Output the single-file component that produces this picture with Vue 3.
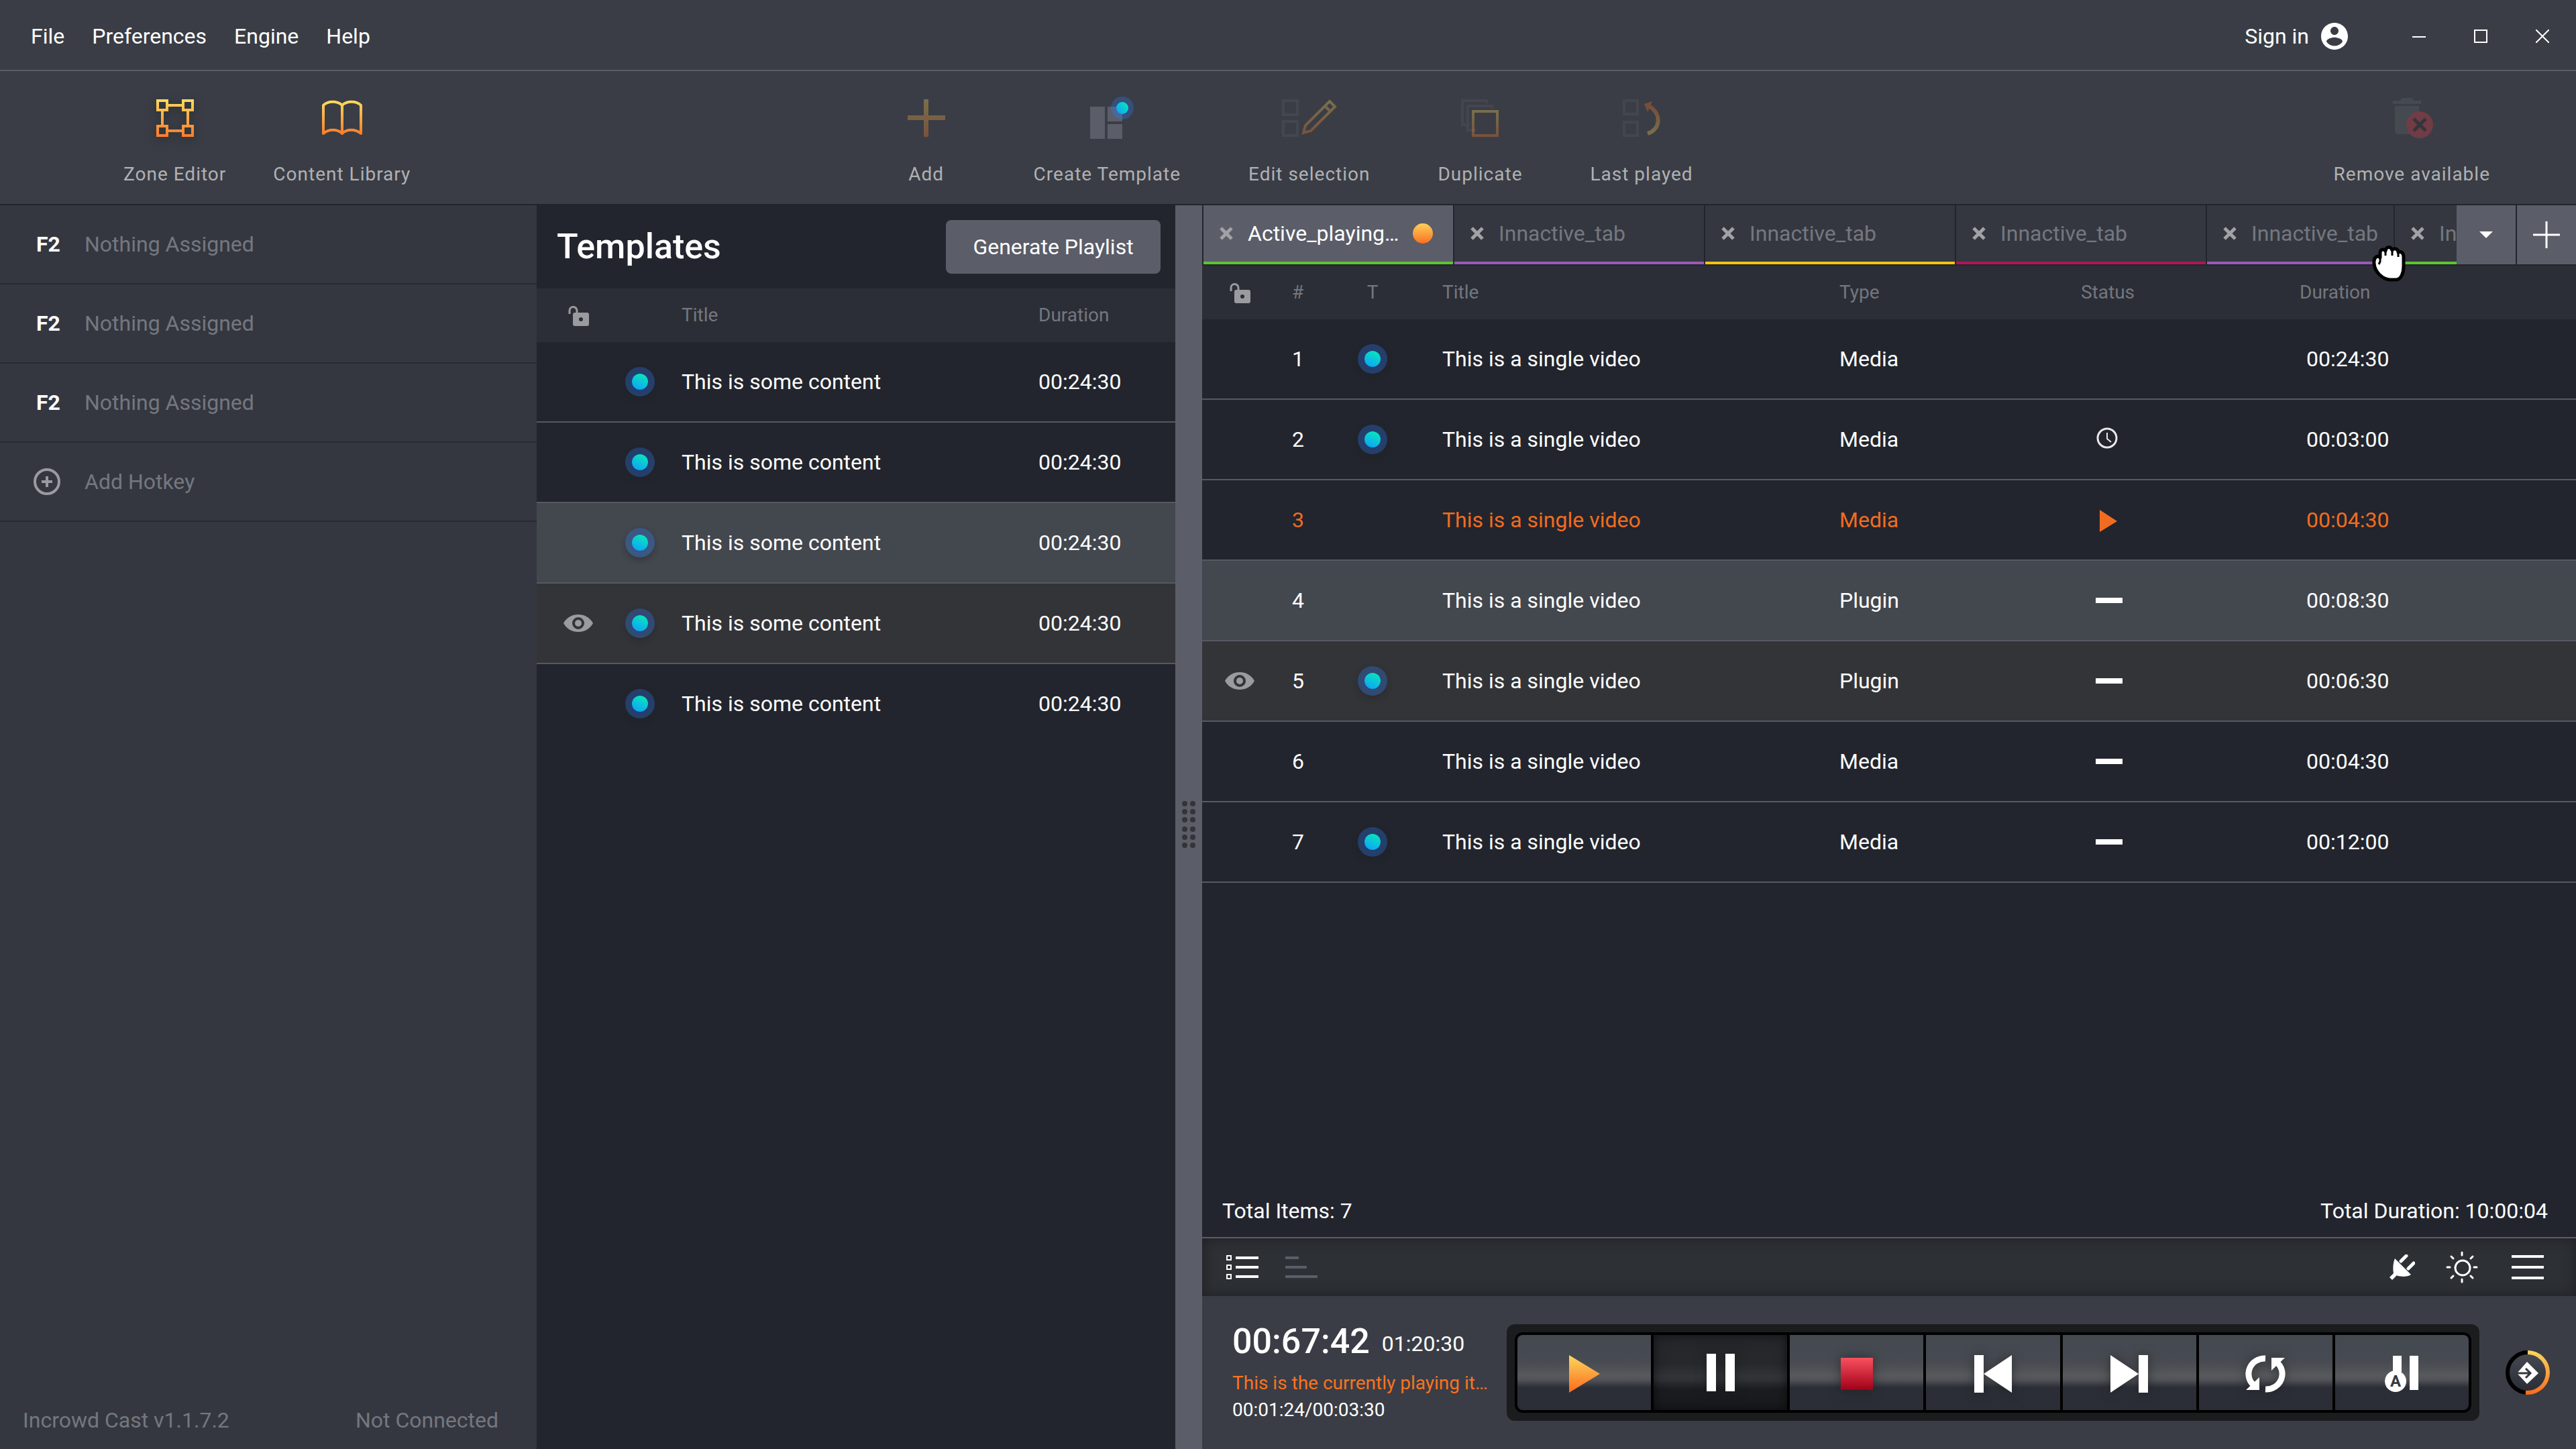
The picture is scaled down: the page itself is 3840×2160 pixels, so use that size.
<script setup>
const menus = ['File', 'Preferences', 'Engine', 'Help']

const hotkeys = [
  { key: 'F2', label: 'Nothing Assigned' },
  { key: 'F2', label: 'Nothing Assigned' },
  { key: 'F2', label: 'Nothing Assigned' }
]

const templates = [
  { title: 'This is some content', duration: '00:24:30' },
  { title: 'This is some content', duration: '00:24:30' },
  { title: 'This is some content', duration: '00:24:30', state: 'selected' },
  { title: 'This is some content', duration: '00:24:30', state: 'hovered' },
  { title: 'This is some content', duration: '00:24:30' }
]

const tabs = [
  { label: 'Active_playing…', color: 'green', active: true },
  { label: 'Innactive_tab', color: 'purple' },
  { label: 'Innactive_tab', color: 'yellow' },
  { label: 'Innactive_tab', color: 'crimson' },
  { label: 'Innactive_tab', color: 'purple', narrow: true },
  { label: 'Innactive_tab', color: 'green' }
]

const items = [
  { id: 1, template: true, type: 'Media', status: '', duration: '00:24:30' },
  { id: 2, template: true, type: 'Media', status: 'clock', duration: '00:03:00' },
  { id: 3, template: false, type: 'Media', status: 'play', duration: '00:04:30', state: 'playing' },
  { id: 4, template: false, type: 'Plugin', status: 'dash', duration: '00:08:30', state: 'selected' },
  { id: 5, template: true, type: 'Plugin', status: 'dash', duration: '00:06:30', state: 'hovered' },
  { id: 6, template: false, type: 'Media', status: 'dash', duration: '00:04:30' },
  { id: 7, template: true, type: 'Media', status: 'dash', duration: '00:12:00' }
]
</script>

<template>
  <div class="app">
    <svg class="defs" width="0" height="0" aria-hidden="true">
      <defs>
        <linearGradient id="gold" x1="0" y1="0" x2="0" y2="1">
          <stop offset="0" stop-color="#fdd75c" />
          <stop offset="1" stop-color="#fd7f2c" />
        </linearGradient>
        <linearGradient id="goldUp" x1="0" y1="1" x2="0" y2="0">
          <stop offset="0" stop-color="#fdd75c" />
          <stop offset="1" stop-color="#fb6f20" />
        </linearGradient>
        <linearGradient id="flame" x1="0" y1="0" x2="0" y2="1">
          <stop offset="0" stop-color="#fdd85f" />
          <stop offset="1" stop-color="#fb6a1c" />
        </linearGradient>
        <linearGradient id="ruby" x1="0" y1="0" x2="0" y2="1">
          <stop offset="0" stop-color="#f9505f" />
          <stop offset="1" stop-color="#a00018" />
        </linearGradient>
        <linearGradient id="aqua" x1="1" y1="0" x2="0" y2="1">
          <stop offset="0" stop-color="#06efb4" />
          <stop offset="1" stop-color="#0f9bff" />
        </linearGradient>
        <linearGradient id="well" x1="0" y1="0" x2="0" y2="1">
          <stop offset="0" stop-color="#454950" />
          <stop offset="1" stop-color="#2b2d36" />
        </linearGradient>
      </defs>
    </svg>

    <header class="menubar">
      <nav class="menus">
        <button v-for="m in menus" :key="m" type="button">{{ m }}</button>
      </nav>
      <div class="window-side">
        <button class="signin" type="button">
          Sign in
          <svg width="40" height="40" viewBox="2 2 20 20" fill="#fff">
            <path d="M12 2C6.48 2 2 6.48 2 12s4.48 10 10 10 10-4.48 10-10S17.52 2 12 2zm0 3c1.66 0 3 1.34 3 3s-1.34 3-3 3-3-1.34-3-3 1.34-3 3-3zm0 14.2c-2.5 0-4.71-1.28-6-3.22.03-1.99 4-3.08 6-3.08 1.99 0 5.97 1.09 6 3.08-1.29 1.94-3.5 3.22-6 3.22z" />
          </svg>
        </button>
        <div class="window-buttons">
          <button type="button" aria-label="Minimize">
            <svg width="20" height="20" viewBox="0 0 20 20"><path d="M0 11H20" stroke="#fff" stroke-width="2" /></svg>
          </button>
          <button type="button" aria-label="Maximize">
            <svg width="20" height="20" viewBox="0 0 20 20"><rect x="1" y="1" width="18" height="18" fill="none" stroke="#fff" stroke-width="2" /></svg>
          </button>
          <button type="button" aria-label="Close">
            <svg width="20" height="20" viewBox="0 0 20 20"><path d="M0 0L20 20M20 0L0 20" stroke="#fff" stroke-width="2" /></svg>
          </button>
        </div>
      </div>
    </header>

    <div class="toolbar">
      <div class="tools tools-left">
        <button class="tool" type="button">
          <svg class="raised" width="56" height="56" viewBox="0 0 56 56" fill="none" stroke="url(#gold)" stroke-width="4">
            <path d="M2 2H16V16H2ZM40 2H54V16H40ZM2 40H16V54H2ZM40 40H54V54H40ZM18 9H38M18 47H38M9 18V38M47 18V38" />
          </svg>
          <span>Zone Editor</span>
        </button>
        <button class="tool" type="button">
          <svg width="60" height="56" viewBox="0 0 60 56" fill="none" stroke="url(#gold)" stroke-width="4" stroke-linejoin="round">
            <path d="M2 51V9C9 2 23 2 30 9C37 2 51 2 58 9V51C50 44 37 44 30 51C23 44 10 44 2 51ZM30 9V51" />
          </svg>
          <span>Content Library</span>
        </button>
      </div>
      <div class="tools tools-mid">
        <button class="tool tool-add" type="button">
          <svg class="dim" width="56" height="56" viewBox="0 0 56 56" fill="url(#gold)">
            <path d="M24 0H31V24H56V31H31V56H24V31H0V24H24Z" />
          </svg>
          <span>Add</span>
        </button>
        <button class="tool" type="button">
          <svg class="spill" width="50" height="56" viewBox="0 0 50 56">
            <path d="M0 11H22V59H0ZM26 11H48V33H26ZM26 37H48V59H26Z" fill="#5b5d68" />
            <circle cx="48" cy="13" r="17" fill="#2a7fff" fill-opacity=".3" />
            <circle cx="48" cy="13" r="9" fill="url(#aqua)" />
          </svg>
          <span>Create Template</span>
        </button>
        <button class="tool" type="button">
          <svg width="82" height="56" viewBox="0 0 82 56" fill="none" stroke-width="4">
            <path d="M2 2H23V23H2ZM2 33H23V54H2Z" stroke="#43474f" />
            <path class="dim" d="M71 3L79 11L43 47L32 50L35 39ZM64 10L72 18" stroke="url(#gold)" />
          </svg>
          <span>Edit selection</span>
        </button>
        <button class="tool" type="button">
          <svg width="56" height="56" viewBox="0 0 56 56" fill="none" stroke-width="4">
            <path d="M14 38H2V2H38V6M22 46H10V10H46V14" stroke="#43474d" />
            <rect class="dim" x="18" y="18" width="36" height="36" stroke="url(#gold)" />
          </svg>
          <span>Duplicate</span>
        </button>
        <button class="tool" type="button">
          <svg width="56" height="56" viewBox="0 0 56 56" fill="none" stroke-width="4">
            <path d="M2 2H22V22H2ZM2 34H22V54H2Z" stroke="#43474d" />
            <g class="dim">
              <path d="M39 10C59 22 56 45 37 51" stroke="url(#goldUp)" stroke-width="6" />
              <path d="M32 7L44 3L37 19Z" fill="#fb6f20" />
            </g>
          </svg>
          <span>Last played</span>
        </button>
      </div>
      <div class="tools tools-right">
        <button class="tool" type="button">
          <svg class="spill" width="56" height="56" viewBox="0 0 56 56">
            <path d="M0 2H11L13 -2H29L31 2H42V7H0ZM3 10H39V46Q39 52 33 52H9Q3 52 3 46Z" fill="#454950" />
            <circle cx="40" cy="38" r="20" fill="#703c46" />
            <path d="M31 29L49 47M49 29L31 47" stroke="#33363c" stroke-width="5" />
          </svg>
          <span>Remove available</span>
        </button>
      </div>
    </div>

    <main class="workspace">
      <aside class="sidebar">
        <ul class="hotkeys">
          <li v-for="(h, i) in hotkeys" :key="i">
            <strong>{{ h.key }}</strong><span>{{ h.label }}</span>
          </li>
          <li>
            <button class="add-hotkey" type="button">
              <svg width="40" height="40" viewBox="0 0 40 40" fill="none" stroke="#9a9b9f">
                <circle cx="20" cy="20" r="18" stroke-width="4" />
                <path d="M20 12V28M12 20H28" stroke-width="4" />
              </svg>
              <span>Add Hotkey</span>
            </button>
          </li>
        </ul>
        <footer class="status">
          <span>Incrowd Cast v1.1.7.2</span>
          <span>Not Connected</span>
        </footer>
      </aside>

      <section class="templates">
        <div class="templates-head">
          <h1>Templates</h1>
          <button class="generate" type="button">Generate Playlist</button>
        </div>
        <table>
          <colgroup>
            <col class="c-lock"><col class="c-mark"><col><col class="c-time">
          </colgroup>
          <thead>
            <tr>
              <th class="mid" aria-label="Locked">
                <svg width="31" height="31" viewBox="0 0 31 31">
                  <path d="M2 13V8A5 5 0 0 1 13 8V12" fill="none" stroke="#9a9b9f" stroke-width="3" />
                  <path fill-rule="evenodd" d="M10 11H28Q31 11 31 14V28Q31 31 28 31H10Q7 31 7 28V14Q7 11 10 11ZM19 18A3 3 0 1 0 19 24A3 3 0 1 0 19 18Z" fill="#9a9b9f" />
                </svg>
              </th>
              <th aria-label="Template"></th>
              <th class="title">Title</th>
              <th>Duration</th>
            </tr>
          </thead>
          <tbody>
            <tr v-for="(t, i) in templates" :key="i" :class="t.state">
              <td class="mid">
                <svg v-if="t.state === 'hovered'" width="44" height="28" viewBox="0 0 44 28">
                  <path fill-rule="evenodd" d="M0 14C5 5 13 1 22 1S39 5 44 14C39 23 31 27 22 27S5 23 0 14ZM22 5A9 9 0 1 0 22 23A9 9 0 1 0 22 5Z" fill="#9a9b9f" />
                  <circle cx="22" cy="14" r="5" fill="#9a9b9f" />
                </svg>
              </td>
              <td class="mid"><span class="dot"></span></td>
              <td class="title">{{ t.title }}</td>
              <td>{{ t.duration }}</td>
            </tr>
          </tbody>
        </table>
      </section>

      <div class="splitter" role="separator" aria-orientation="vertical">
        <svg width="20" height="70" viewBox="0 0 20 70" fill="#333438">
          <template v-for="y in [4, 16, 28, 42, 54, 66]" :key="y">
            <circle cx="4" :cy="y" r="4" /><circle cx="16" :cy="y" r="4" />
          </template>
        </svg>
      </div>

      <section class="playlist">
        <div class="tabbar">
          <div class="tabs" role="tablist">
            <div v-for="(t, i) in tabs" :key="i" :class="['tab', t.color, { active: t.active, narrow: t.narrow }]">
              <button type="button" class="tab-close" aria-label="Close tab">
                <svg width="22" height="20" viewBox="0 0 22 20"><path d="M3 2L19 18M19 2L3 18" stroke="#a1a2a5" stroke-width="5" /></svg>
              </button>
              <button type="button" class="tab-label" role="tab" :aria-selected="!!t.active">{{ t.label }}</button>
              <span v-if="t.active" class="live"></span>
            </div>
          </div>
          <button class="tab-action" type="button" aria-label="All tabs">
            <svg width="20" height="10" viewBox="0 0 20 10"><path d="M0 0H20L10 10Z" fill="#fff" /></svg>
          </button>
          <button class="tab-action" type="button" aria-label="New tab">
            <svg width="40" height="40" viewBox="0 0 40 40"><path d="M20 0V40M0 20H40" stroke="#fff" stroke-width="3" /></svg>
          </button>
        </div>
        <svg class="grab" width="50" height="54" viewBox="0 0 50 54" fill="#fff" stroke="#000" stroke-linejoin="round">
          <path d="M3 27C2 17 8 14 12 18V10C13 5 18 5 20 8C21 1 28 1 30 7C33 3 39 5 39 10C43 8 47 11 47 17V31C47 40 44 51 35 51H26C15 50 4 39 3 27Z" stroke-width="5" />
          <path d="M12 16V24L10 28M20 8V15M30 7V15M39 10V17" fill="none" stroke-width="3" />
        </svg>
        <table>
          <colgroup>
            <col class="p-lock"><col class="p-num"><col class="p-mark"><col><col class="p-type"><col class="p-status"><col class="p-time">
          </colgroup>
          <thead>
            <tr>
              <th class="mid" aria-label="Locked">
                <svg width="31" height="31" viewBox="0 0 31 31">
                  <path d="M2 13V8A5 5 0 0 1 13 8V12" fill="none" stroke="#9a9b9f" stroke-width="3" />
                  <path fill-rule="evenodd" d="M10 11H28Q31 11 31 14V28Q31 31 28 31H10Q7 31 7 28V14Q7 11 10 11ZM19 18A3 3 0 1 0 19 24A3 3 0 1 0 19 18Z" fill="#9a9b9f" />
                </svg>
              </th>
              <th class="num">#</th>
              <th class="mid">T</th>
              <th class="name">Title</th>
              <th>Type</th>
              <th class="mid">Status</th>
              <th class="time">Duration</th>
            </tr>
          </thead>
          <tbody>
            <tr v-for="it in items" :key="it.id" :class="it.state">
              <td class="mid">
                <svg v-if="it.state === 'hovered'" width="44" height="28" viewBox="0 0 44 28">
                  <path fill-rule="evenodd" d="M0 14C5 5 13 1 22 1S39 5 44 14C39 23 31 27 22 27S5 23 0 14ZM22 5A9 9 0 1 0 22 23A9 9 0 1 0 22 5Z" fill="#9a9b9f" />
                  <circle cx="22" cy="14" r="5" fill="#9a9b9f" />
                </svg>
              </td>
              <td class="num">{{ it.id }}</td>
              <td class="mid"><span v-if="it.template" class="dot"></span></td>
              <td class="name">This is a single video</td>
              <td>{{ it.type }}</td>
              <td class="mid">
                <svg v-if="it.status === 'clock'" width="34" height="36" viewBox="0 0 34 36" fill="none" stroke="#e8e8e8" stroke-width="3">
                  <circle cx="16" cy="16" r="14" /><path d="M16 8V17L22 22" stroke-width="2" />
                </svg>
                <svg v-else-if="it.status === 'play'" width="28" height="38" viewBox="0 0 28 38"><path d="M2 4L28 21L2 37Z" fill="#f16c21" /></svg>
                <svg v-else-if="it.status === 'dash'" width="44" height="8" viewBox="0 0 44 8"><path d="M4 0H44V8H4Z" fill="#fff" /></svg>
              </td>
              <td class="time">{{ it.duration }}</td>
            </tr>
          </tbody>
        </table>

        <div class="totals">
          <span>Total Items: 7</span>
          <span>Total Duration: 10:00:04</span>
        </div>

        <div class="viewbar">
          <div class="view-left">
            <button type="button" aria-label="List view">
              <svg width="48" height="36" viewBox="0 0 48 36">
                <path d="M1 1H7V7H1ZM1 15H7V21H1ZM1 29H7V35H1Z" fill="none" stroke="#fff" stroke-width="2" />
                <path d="M14 2H48V6H14ZM14 16H48V20H14ZM14 30H48V34H14Z" fill="#fff" />
              </svg>
            </button>
            <button type="button" aria-label="Timeline view">
              <svg width="48" height="36" viewBox="0 0 48 36"><path d="M0 2H20V6H0ZM0 16H32V20H0ZM0 30H48V34H0Z" fill="#5b5d68" /></svg>
            </button>
          </div>
          <div class="view-right">
            <button type="button" aria-label="Connection">
              <svg width="38" height="38" viewBox="0 0 38 38" fill="#fff">
                <path d="M8 6L32 30C26 34 18 33 12 32L11 31L4 38L0 34L6 28C5 22 5 13 8 6Z" />
                <path d="M17 10L25 2M28 21L36 13" stroke="#fff" stroke-width="5" stroke-linecap="round" />
              </svg>
            </button>
            <button type="button" aria-label="Brightness">
              <svg class="spill" width="48" height="48" viewBox="2 0 48 48" fill="none" stroke="#fff" stroke-width="3" stroke-linecap="round">
                <circle cx="25" cy="25" r="11" />
                <path d="M24 2V6M24 42V46M2 24H6M42 24H46M8 8L11 11M40 8L37 11M8 40L11 37M40 40L37 37" />
              </svg>
            </button>
            <button type="button" aria-label="Menu">
              <svg width="48" height="36" viewBox="0 0 48 36"><path d="M0 0H48V4H0ZM0 16H48V20H0ZM0 32H48V36H0Z" fill="#fff" /></svg>
            </button>
          </div>
        </div>

        <div class="player">
          <div class="now">
            <div class="clock"><b>00:67:42</b><span>01:20:30</span></div>
            <p class="now-title">This is the currently playing it…</p>
            <p>00:01:24/00:03:30</p>
          </div>
          <div class="transport">
            <div class="keys">
              <button type="button" aria-label="Play">
                <svg width="46" height="56" viewBox="0 0 46 56"><path d="M0 0L46 28L0 56Z" fill="url(#flame)" /></svg>
              </button>
              <button type="button" aria-label="Pause" class="pressed">
                <svg class="glow" width="42" height="56" viewBox="0 0 42 56" fill="#fff"><path d="M0 0H14V56H0ZM28 0H42V56H28Z" /></svg>
              </button>
              <button type="button" aria-label="Stop">
                <svg class="glow" width="48" height="48" viewBox="0 0 48 48"><path d="M0 0H48V48H0Z" fill="url(#ruby)" /></svg>
              </button>
              <button type="button" aria-label="Previous">
                <svg class="glow" width="56" height="56" viewBox="0 0 56 56" fill="#fff"><path d="M0 0H14V56H0ZM56 0V56L14 28Z" /></svg>
              </button>
              <button type="button" aria-label="Next">
                <svg class="glow" width="56" height="56" viewBox="0 0 56 56" fill="#fff"><path d="M42 0H56V56H42ZM0 0V56L42 28Z" /></svg>
              </button>
              <button type="button" aria-label="Loop">
                <svg class="glow" width="58" height="56" viewBox="0 0 58 56" fill="none" stroke="#fff" stroke-width="9">
                  <path d="M29 5A24 23 0 0 0 13 46M29 51A24 23 0 0 0 45 10" />
                  <path d="M0 52H20V33ZM58 4H38V23Z" fill="#fff" stroke="none" />
                </svg>
              </button>
              <button type="button" aria-label="Auto pause">
                <svg width="50" height="54" viewBox="0 0 50 54" fill="#fff">
                  <path d="M12 0H25V24H12ZM37 0H50V51H37Z" />
                  <circle cx="16" cy="38" r="16" />
                  <text x="16" y="46" text-anchor="middle" class="auto">A</text>
                </svg>
              </button>
            </div>
          </div>
          <button class="sync" type="button" aria-label="Engine">
            <svg width="66" height="66" viewBox="0 0 66 66" fill="none">
              <circle cx="33" cy="33" r="28" fill="url(#well)" />
              <path d="M33 3A30 30 0 0 0 33 63" stroke="#000" stroke-width="6" />
              <path d="M33 0A33 33 0 0 1 33 66H30V60H33A27 27 0 0 0 33 6Z" fill="url(#flame)" />
              <path d="M32 17L49 34L32 50L17 34Z" fill="#fff" />
              <path d="M16 34H37M30 27L37 34L30 41" stroke="#34373e" stroke-width="3" />
            </svg>
          </button>
        </div>
      </section>
    </main>
  </div>
</template>

<style>
html,
body {
  background: #22252d;
}
</style>

<style scoped>
.app {
  display: flex;
  flex-direction: column;
  min-height: 100vh;
  font-family: Roboto, 'Liberation Sans', sans-serif;
  font-size: 32px;
  line-height: 40px;
  color: #fff;
  background: #3a3d45;
}

.app *,
.app *::before {
  box-sizing: border-box;
}

.defs {
  position: absolute;
}

svg {
  display: block;
  flex: none;
}

button {
  margin: 0;
  padding: 0;
  border: 0;
  background: none;
  color: inherit;
  font: inherit;
  cursor: pointer;
}

/* menu bar */
.menubar {
  display: flex;
  align-items: center;
  justify-content: space-between;
  height: 106px;
  padding: 4px 40px 0 46px;
  border-bottom: 2px solid #5a5c60;
}

.menus {
  display: flex;
  gap: 41px;
}

.window-side,
.window-buttons,
.signin {
  display: flex;
  align-items: center;
}

.window-side {
  gap: 96px;
}

.window-buttons {
  gap: 72px;
}

.signin {
  gap: 18px;
}

/* toolbar */
.toolbar {
  display: grid;
  grid-template-columns: 34% 1fr auto;
  padding: 42px 0 28px;
  border-bottom: 2px solid #22252d;
}

.tools {
  display: flex;
}

.tools-left {
  gap: 70px;
  padding-left: 184px;
}

.tools-mid {
  gap: 101px;
  padding-left: 16px;
}

.tools-right {
  padding-right: 128px;
}

.tool {
  display: flex;
  flex-direction: column;
  align-items: center;
  gap: 40px;
  font-size: 28px;
  line-height: 32px;
  letter-spacing: 1px;
  color: #b0b1b4;
}

.tool-add {
  width: 118px;
}

.dim {
  opacity: .32;
}

.spill {
  overflow: visible;
}

.raised {
  filter: drop-shadow(0 4px 8px rgba(0, 0, 0, .3));
  overflow: visible;
}

/* columns */
.workspace {
  flex: 1;
  display: grid;
  grid-template-columns: minmax(0, 800fr) minmax(0, 952fr) 40px minmax(0, 2048fr);
}

.sidebar {
  display: flex;
  flex-direction: column;
  justify-content: space-between;
  background: #343740;
  color: #74777f;
}

.hotkeys {
  margin: 0;
  padding: 0;
  list-style: none;
}

.hotkeys li {
  display: flex;
  align-items: center;
  height: 118px;
  padding-left: 54px;
  border-bottom: 2px solid #272a32;
}

.hotkeys strong {
  width: 72px;
  color: #fff;
}

.hotkeys li:last-child {
  padding-left: 50px;
}

.add-hotkey {
  display: flex;
  align-items: center;
  gap: 36px;
}

.status {
  display: flex;
  justify-content: space-between;
  padding: 0 57px 23px 34px;
}

/* tables */
table {
  width: 100%;
  table-layout: fixed;
  border-collapse: separate;
  border-spacing: 0;
}

th {
  height: 80px;
  padding: 0;
  background: #2b2e36;
  color: #74777f;
  font-size: 28px;
  font-weight: 400;
  text-align: left;
}

td {
  height: 120px;
  padding: 0;
  border-bottom: 2px solid #565963;
}

.mid {
  text-align: center;
}

.mid svg,
.dot {
  display: block;
  margin: 0 auto;
}

.selected td {
  background: #43474e;
}

.hovered td {
  background: #333438;
}

.playing td {
  color: #f16c21;
}

.dot {
  width: 44px;
  height: 44px;
  border: 10px solid #2a7fff4d;
  border-radius: 50%;
  background: linear-gradient(205deg, #06efb4, #0f9bff) padding-box;
  box-shadow: 0 4px 8px rgba(32, 32, 32, .4);
}

/* templates */
.templates {
  background: #22252d;
}

.templates-head {
  display: flex;
  align-items: center;
  justify-content: space-between;
  height: 124px;
  padding: 0 22px 0 30px;
}

h1 {
  margin: 0;
  font-size: 52px;
  line-height: 60px;
  font-weight: 500;
}

.generate {
  width: 320px;
  height: 80px;
  border-radius: 8px;
  background: #5b5d68;
}

.c-lock {
  width: 124px;
}

.c-mark {
  width: 60px;
}

.c-time {
  width: 204px;
}

.title {
  padding-left: 32px;
}

.templates tr:last-child td {
  border-bottom-color: transparent;
}

.splitter {
  display: flex;
  justify-content: center;
  padding-top: 888px;
  background: #5b5d68;
}

/* playlist */
.playlist {
  position: relative;
  display: flex;
  flex-direction: column;
  background: #22252d;
}

.tabbar {
  display: flex;
  gap: 2px;
  height: 90px;
  padding-bottom: 2px;
}

.tabs {
  flex: 1;
  display: flex;
  gap: 2px;
  min-width: 0;
  margin-right: -2px;
  padding-left: 2px;
  overflow: hidden;
}

.tab {
  flex: none;
  display: flex;
  align-items: center;
  width: 372px;
  padding-left: 23px;
  border-bottom: 4px solid;
  background: #343740;
}

.tab-label {
  margin-left: 21px;
  color: #74777f;
}

.narrow {
  width: 278px;
}

.active {
  background: #5b5d68;
}

.active .tab-label {
  color: #fff;
}

.live {
  width: 30px;
  height: 30px;
  margin: 0 30px 0 auto;
  border-radius: 50%;
  background: linear-gradient(#fdd15a, #fb6f20);
}

.green { border-bottom-color: #5cc52f; }
.purple { border-bottom-color: #9b59b6; }
.yellow { border-bottom-color: #f1c40f; }
.crimson { border-bottom-color: #b0155a; }

.tab-action {
  display: flex;
  align-items: center;
  justify-content: center;
  width: 88px;
  background: #5b5d68;
}

.grab {
  position: absolute;
  top: 60px;
  left: 1744px;
}

.p-lock { width: 112px; }
.p-num { width: 86px; }
.p-mark { width: 112px; }
.p-type { width: 250px; }
.p-status { width: 300px; }
.p-time { width: 548px; }

.num {
  padding-left: 22px;
}

.name {
  padding-left: 48px;
}

th.time {
  padding-left: 136px;
}

td.time {
  padding-left: 146px;
}

.totals {
  display: flex;
  justify-content: space-between;
  margin-top: auto;
  padding: 0 42px 19px 30px;
  border-bottom: 2px solid #5b5d68;
}

.viewbar {
  display: flex;
  align-items: center;
  justify-content: space-between;
  height: 86px;
  padding: 0 48px 0 36px;
  background: #2d3035;
  box-shadow: inset 0 0 20px rgba(20, 22, 22, .6);
}

.view-left,
.view-right {
  display: flex;
  align-items: center;
}

.view-left {
  gap: 40px;
}

.view-right {
  gap: 48px;
}

.player {
  display: flex;
  align-items: center;
  height: 228px;
  padding: 0 39px 0 45px;
  background: #3a3d45;
}

.now {
  flex: none;
  width: 409px;
  font-size: 28px;
}

.now p {
  margin: 0;
}

.now .now-title {
  color: #f9731f;
}

.clock {
  display: flex;
  align-items: flex-end;
  gap: 18px;
  margin-bottom: 12px;
}

.clock b {
  font-size: 52px;
  line-height: 60px;
  font-weight: 500;
}

.clock span {
  font-size: 32px;
  line-height: 54px;
}

.transport {
  flex: 1;
  padding: 12px;
  border-radius: 12px;
  background: #1b1c1e;
}

.keys {
  display: flex;
  gap: 4px;
  padding: 4px;
  border-radius: 12px;
  background: #000;
}

.keys button {
  flex: 1;
  display: flex;
  align-items: center;
  justify-content: center;
  height: 112px;
  padding-top: 4px;
  background: linear-gradient(#444850, #464a51 32%, #4c4f53 42%, #57595d 54%, #505257 60%, #2b2e36 70%, #2b2d36);
}

.keys button:first-child {
  border-radius: 8px 0 0 8px;
}

.keys button:last-child {
  border-radius: 0 8px 8px 0;
}

.keys .pressed {
  padding-top: 0;
  background: linear-gradient(#25282b, #26282b 38%, #323336 54%, #303134 60%, #1b1c20 72%, #1a1b1d);
  box-shadow: inset 0 0 18px rgba(0, 0, 0, .6);
}

.glow {
  overflow: visible;
  filter: drop-shadow(0 0 8px rgba(20, 22, 22, .55));
}

.auto {
  fill: #35383f;
  font-size: 24px;
  font-weight: 700;
}

.sync {
  margin-left: 39px;
}
</style>
